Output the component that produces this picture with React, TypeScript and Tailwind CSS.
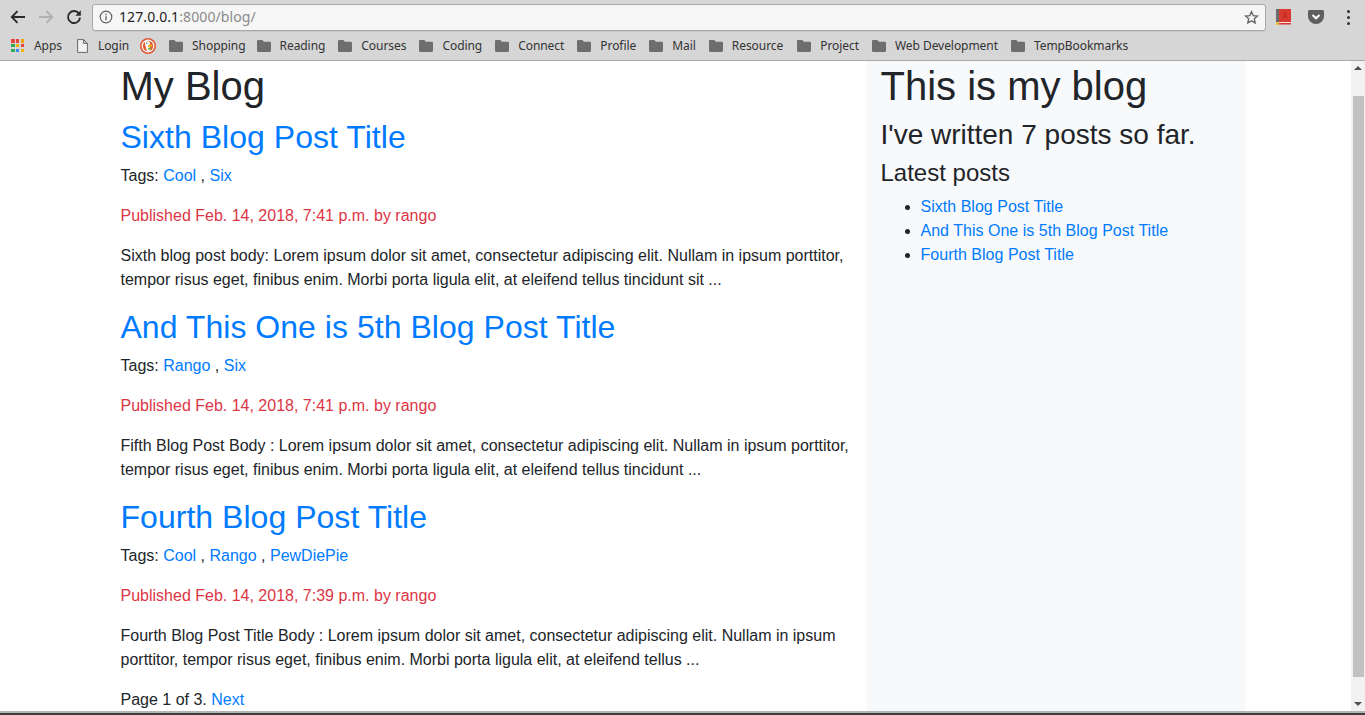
import React from "react";

const folders = [
  { name: "Shopping", cls: "-mr-[2px]" },
  { name: "Reading", cls: "" },
  { name: "Courses", cls: "" },
  { name: "Coding", cls: "" },
  { name: "Connect", cls: "" },
  { name: "Profile", cls: "" },
  { name: "Mail", cls: "" },
  { name: "Resource", cls: "mr-[1px]" },
  { name: "Project", cls: "" },
  { name: "Web Development", cls: "" },
  { name: "TempBookmarks", cls: "" },
];

function Folder() {
  return (
    <svg width="14" height="12" viewBox="0 0 14 12" className="shrink-0">
      <path d="M0 1.2C0 .5.5 0 1.2 0h4L7 1.8h5.8c.7 0 1.2.5 1.2 1.2v7.8c0 .7-.5 1.200-1.200 1.200H1.200C.5 12 0 11.500 0 10.800z" fill="#6e6e6e" />
    </svg>
  );
}

function AppsIcon() {
  const c = ["#e8453c", "#e8453c", "#f4a300", "#34a853", "#f4b400", "#e8453c", "#34a853", "#4285f4", "#f4b400"];
  return (
    <div className="grid grid-cols-[repeat(3,3.500px)] gap-[1.250px] w-[13px] shrink-0">
      {c.map((k, i) => (
        <span key={i} className="h-[3.500px]" style={{ background: k }} />
      ))}
    </div>
  );
}

function Duck() {
  return (
    <svg width="16" height="16" viewBox="0 0 16 16" className="shrink-0">
      <circle cx="8" cy="8" r="8" fill="#de5833" />
      <circle cx="8" cy="8" r="6.400" fill="#fff" />
      <circle cx="8" cy="8" r="5.200" fill="#de5833" />
      <path d="M4.800 4 C6 2.800 8.500 2.800 9.500 4 C10.500 5 10 6.500 9.200 7 L10 13 L7 13.200 C6 10 5 7 4.800 4z" fill="#fff" />
      <path d="M7.500 7.200 L12.200 6.600 L12 8.400 L8.500 9.200z" fill="#f2b31c" />
      <path d="M7.800 10.200 L11 9.600 L10.800 11.600 L8.300 11.800z" fill="#65bc46" />
      <circle cx="6.800" cy="5.200" r=".7" fill="#2d4f8e" />
    </svg>
  );
}

function Link({ children }: { children: React.ReactNode }) {
  return <a className="text-[#007bff]">{children}</a>;
}

function Post({ title, tags, date, body }: { title: string; tags: string[]; date: string; body: string }) {
  return (
    <div>
      <h2 className="text-[32px] leading-[38px] mb-2 tracking-[0.03px]">
        <Link>{title}</Link>
      </h2>
      <p className="mb-4">
        Tags:{" "}
        {tags.map((t, i) => (
          <span key={t}>
            <Link>{t}</Link>
            {i < tags.length - 1 ? " , " : ""}
          </span>
        ))}
      </p>
      <p className="mb-4 text-[#dc3545]">Published {date} by rango</p>
      <p className="mb-4">{body}</p>
    </div>
  );
}

export default function App() {
  return (
    <div className="h-[715px] w-[1365px] overflow-hidden flex flex-col bg-white font-['Liberation_Sans',sans-serif] text-[16px] leading-6 text-[#212529]">
      {/* Browser chrome */}
      <header className="h-[61px] shrink-0 bg-[#d6d6d6] border-b border-[#a9a9a9] font-['Noto_Sans',sans-serif] flex flex-col">
        <div className="h-[31px] shrink-0 flex items-center pl-[10px] pr-[10px] pt-[3px]">
          <svg width="16" height="14" viewBox="0 0 16 14" className="shrink-0">
            <path d="M15 7H2M7.500 1.200 1.800 7l5.700 5.800" fill="none" stroke="#2b2b2b" strokeWidth="1.900" />
          </svg>
          <svg width="16" height="14" viewBox="0 0 16 14" className="shrink-0 ml-[12px]">
            <path d="M1 7h13M8.500 1.200 14.200 7l-5.700 5.800" fill="none" stroke="#b0b0b0" strokeWidth="1.900" />
          </svg>
          <svg width="16" height="16" viewBox="0 0 16 16" className="shrink-0 ml-[12px]">
            <path d="M13.200 5A6 6 0 1 0 14 8.600" fill="none" stroke="#2b2b2b" strokeWidth="1.900" />
            <path d="M14.800 1.200v5.500H9.300z" fill="#2b2b2b" />
          </svg>
          <div className="ml-[10px] w-[1174px] h-[27px] shrink-0 bg-[#f6f6f6] border border-[#a8a8a8] rounded-[3px] flex items-center pl-[6px] pr-[6px] shadow-[0_1px_0_#c8c8c8]">
            <svg width="14" height="14" viewBox="0 0 14 14" className="shrink-0">
              <circle cx="7" cy="7" r="5.800" fill="none" stroke="#5f5f5f" strokeWidth="1.200" />
              <path d="M7 6.200v4M7 3.800v1.400" stroke="#5f5f5f" strokeWidth="1.300" />
            </svg>
            <span className="ml-[6px] text-[14px] leading-[20px] text-[#222] tracking-[0.1px]">
              127.0.0.1<span className="text-[#8a8a8a]">:8000/blog/</span>
            </span>
            <svg width="15" height="15" viewBox="0 0 24 24" className="ml-auto shrink-0">
              <path d="m12 2.800 2.800 6.100 6.700.7-5 4.500 1.400 6.600-5.900-3.400-5.900 3.400 1.400-6.600-5-4.500 6.700-.7z" fill="none" stroke="#666" strokeWidth="2.200" />
            </svg>
          </div>
          <svg width="15" height="16" viewBox="0 0 15 16" className="ml-[10px] shrink-0">
            <rect x="0" y="0" width="3" height="15" fill="#6b6b6b" />
            <rect x="3" y="0" width="12" height="13" fill="#d93a2f" />
            <rect x="3" y="13" width="12" height="1" fill="#f0e8e0" />
            <rect x="3" y="14" width="12" height="1.500" fill="#d93a2f" />
            <rect x="0" y="13" width="3" height="3" fill="#e8b93a" />
            <path d="M6.500 10 9 3l2.500 7M7.500 7.500h3" fill="none" stroke="#b92c24" strokeWidth="1" />
          </svg>
          <svg width="16" height="14" viewBox="0 0 16 14" className="ml-[17px] shrink-0">
            <path d="M0 1.500C0 .6.6 0 1.500 0h13c.9 0 1.500.6 1.500 1.500v5a8 7.500 0 0 1-16 0z" fill="#5f5f5f" />
            <path d="m4.500 5 3.500 3.300L11.500 5" fill="none" stroke="#fff" strokeWidth="2" />
          </svg>
          <div className="ml-[23px] flex flex-col gap-[3px] shrink-0">
            <span className="w-[3px] h-[3px] rounded-full bg-[#333]" />
            <span className="w-[3px] h-[3px] rounded-full bg-[#333]" />
            <span className="w-[3px] h-[3px] rounded-full bg-[#333]" />
          </div>
        </div>
        <nav className="flex-1 flex items-center pl-[11px] text-[12px] leading-4 text-[#333] tracking-[-0.06px]">
          <AppsIcon />
          <span className="ml-[10px]">Apps</span>
          <svg width="11" height="14" viewBox="0 0 11 14" className="ml-[15px] shrink-0">
            <path d="M.6.600h6l3.800 3.800v9H.6zM6.600.6v3.800h3.800" fill="#f2f2f2" stroke="#666" strokeWidth="1" />
          </svg>
          <span className="ml-[10px]">Login</span>
          <span className="ml-[11px] shrink-0 flex">
            <Duck />
          </span>
          <div className="ml-[13px] flex items-center gap-[13px]">
            {folders.map((f) => (
              <div key={f.name} className={`flex items-center gap-[9px] ${f.cls}`}>
                <Folder />
                <span className="whitespace-nowrap">{f.name}</span>
              </div>
            ))}
          </div>
        </nav>
      </header>

      {/* Page */}
      <div className="flex-1 min-h-0 flex">
        <main className="w-[1351px] shrink-0 overflow-hidden pl-[105.5px]">
          <div className="w-[1140px] flex h-full">
            <section className="w-[760px] shrink-0 px-[15px] overflow-hidden">
              <h1 className="text-[40px] leading-[48px] mb-2 mt-px">My Blog</h1>
              <Post
                title="Sixth Blog Post Title"
                tags={["Cool", "Six"]}
                date="Feb. 14, 2018, 7:41 p.m."
                body="Sixth blog post body: Lorem ipsum dolor sit amet, consectetur adipiscing elit. Nullam in ipsum porttitor, tempor risus eget, finibus enim. Morbi porta ligula elit, at eleifend tellus tincidunt sit ..."
              />
              <Post
                title="And This One is 5th Blog Post Title"
                tags={["Rango", "Six"]}
                date="Feb. 14, 2018, 7:41 p.m."
                body="Fifth Blog Post Body : Lorem ipsum dolor sit amet, consectetur adipiscing elit. Nullam in ipsum porttitor, tempor risus eget, finibus enim. Morbi porta ligula elit, at eleifend tellus tincidunt ..."
              />
              <Post
                title="Fourth Blog Post Title"
                tags={["Cool", "Rango", "PewDiePie"]}
                date="Feb. 14, 2018, 7:39 p.m."
                body="Fourth Blog Post Title Body : Lorem ipsum dolor sit amet, consectetur adipiscing elit. Nullam in ipsum porttitor, tempor risus eget, finibus enim. Morbi porta ligula elit, at eleifend tellus ..."
              />
              <p>
                Page 1 of 3. <Link>Next</Link>
              </p>
            </section>
            <aside className="w-[380px] shrink-0 px-[15px] bg-[#f8f9fa]">
              <h1 className="text-[40px] leading-[48px] mb-2 mt-px">This is my blog</h1>
              <h3 className="text-[28px] leading-[33px] mb-2">I've written 7 posts so far.</h3>
              <h4 className="text-[24px] leading-[28px] mb-2">Latest posts</h4>
              <ul className="list-disc pl-10 tracking-[0.02px]">
                <li><Link>Sixth Blog Post Title</Link></li>
                <li><Link>And This One is 5th Blog Post Title</Link></li>
                <li><Link>Fourth Blog Post Title</Link></li>
              </ul>
            </aside>
          </div>
        </main>
        {/* Scrollbar */}
        <div className="w-[14px] shrink-0 bg-[#f1f1f1] flex flex-col items-center">
          <div className="h-[35px] w-full shrink-0 flex justify-center pt-[5px]">
            <div className="w-0 h-0 border-x-[4px] border-x-transparent border-b-[4px] border-b-[#505050]" />
          </div>
          <div className="w-[11px] h-[581px] bg-[#c1c1c1] shrink-0 ml-[1px]" />
          <div className="mt-auto mb-[5px] w-0 h-0 border-x-[4px] border-x-transparent border-t-[4px] border-t-[#505050]" />
        </div>
      </div>
      <div className="h-[4px] shrink-0 bg-[#3c3c3c] border-t-2 border-[#b4b4b4]" />
    </div>
  );
}
